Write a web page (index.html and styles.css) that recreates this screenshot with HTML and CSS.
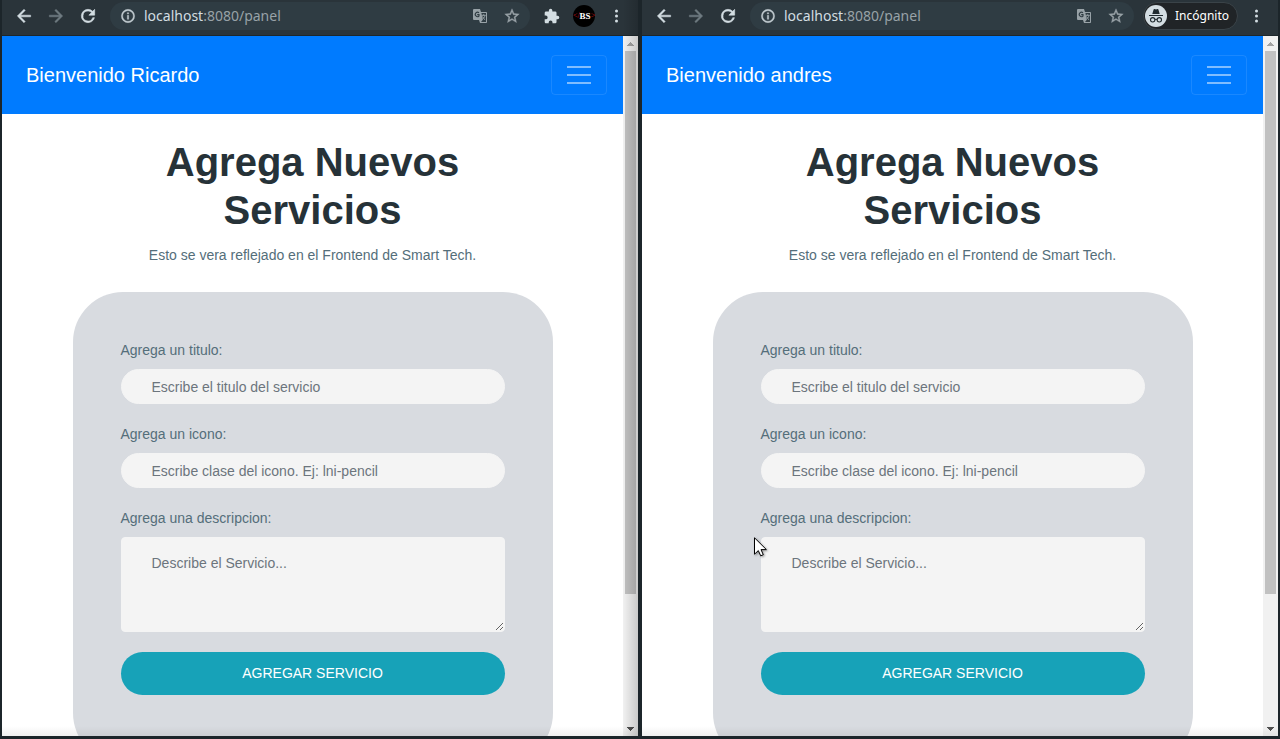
FILE: index.html
```html
<!DOCTYPE html>
<html lang="es">
<head>
<meta charset="utf-8">
<meta name="viewport" content="width=device-width, initial-scale=1">
<title>Panel</title>
<link rel="stylesheet" href="styles.css">
</head>
<body>
<svg class="sprite" aria-hidden="true">
  <symbol id="back" viewBox="0 0 24 24"><path d="M20 11H7.8l5.6-5.6L12 4l-8 8 8 8 1.4-1.4L7.8 13H20z" stroke="currentColor" stroke-width=".6"/></symbol>
  <symbol id="forward" viewBox="0 0 24 24"><path d="M4 11h12.2l-5.6-5.6L12 4l8 8-8 8-1.4-1.4 5.6-5.6H4z" stroke="currentColor" stroke-width=".6"/></symbol>
  <symbol id="reload" viewBox="0 0 24 24"><path d="M17.65 6.35A7.96 7.96 0 0 0 12 4a8 8 0 1 0 7.73 10h-2.08A6 6 0 1 1 12 6c1.66 0 3.14.69 4.22 1.78L13 11h7V4z" stroke="currentColor" stroke-width=".7"/></symbol>
  <symbol id="info" viewBox="0 0 24 24"><path d="M11 7h2v2h-2zm0 4h2v6h-2zm1-9a10 10 0 1 0 0 20 10 10 0 0 0 0-20zm0 18a8 8 0 1 1 0-16 8 8 0 0 1 0 16z" stroke="currentColor" stroke-width=".6"/></symbol>
  <symbol id="translate" viewBox="0 0 16 16">
    <path d="M2 1h6l1 3h5.2a.8.8 0 0 1 .8.8v9.4a.8.8 0 0 1-.8.8H8l-1-3H2a1 1 0 0 1-1-1V2a1 1 0 0 1 1-1z"/>
    <path class="cut" d="M9.4 5h4.6v9H9l1.8-2.2z"/>
    <path class="cut-line" d="M7 4.8A2.2 2.2 0 1 0 7 8V6.6H5.2"/>
    <path class="ink-line" d="M9.8 7.3h3.8M11.7 6.3v1M13 7.4c-.4 1.8-1.4 3-2.5 3.7M10.5 8.5c.6 1.4 1.6 2.5 2.6 3.3"/>
  </symbol>
  <symbol id="star" viewBox="1 1 22 22"><path d="M22 9.24l-7.19-.62L12 2 9.19 8.63 2 9.24l5.46 4.73L5.82 21 12 17.27 18.18 21l-1.63-7.03zM12 15.4l-3.76 2.27 1-4.28-3.32-2.88 4.38-.38L12 6.1l1.71 4.04 4.38.38-3.32 2.88 1 4.28z" stroke="currentColor" stroke-width=".5"/></symbol>
  <symbol id="puzzle" viewBox="1 0 23 23"><path d="M20.5 11H19V7a2 2 0 0 0-2-2h-4V3.5a2.5 2.5 0 0 0-5 0V5H4a2 2 0 0 0-2 2v3.8h1.5a2.7 2.7 0 0 1 0 5.4H2V20c0 1.1.9 2 2 2h3.8v-1.5a2.7 2.7 0 0 1 5.4 0V22H17a2 2 0 0 0 2-2v-4h1.5a2.5 2.5 0 0 0 0-5z"/></symbol>
  <symbol id="dots" viewBox="0 0 20 20"><circle cx="10.5" cy="5" r="1.5"/><circle cx="10.5" cy="10" r="1.5"/><circle cx="10.5" cy="15" r="1.5"/></symbol>
  <symbol id="spy" viewBox="0 0 22 22">
    <circle cx="11" cy="11" r="11"/>
    <path class="dark" d="M7.3 9l1.3-4.4c.2-.6.6-.7 1.1-.5l1.3.4 1.3-.4c.5-.2.9-.1 1.1.5L14.7 9z"/>
    <path class="dark" d="M4 10h14v1H4z"/>
    <g class="dark-line"><circle cx="7.7" cy="14.8" r="2.2"/><circle cx="14.3" cy="14.8" r="2.2"/><path d="M9.9 14.6q1.1-.8 2.2 0"/></g>
  </symbol>
  <symbol id="up" viewBox="0 0 7 4"><path d="M3 0h1v1h1v1h1v1h1v1H0V3h1V2h1V1h1z"/></symbol>
  <symbol id="down" viewBox="0 0 7 4"><path d="M3 4h1V3h1V2h1V1h1V0H0v1h1v1h1v1h1z"/></symbol>
</svg>

<main class="desktop">
  <section class="window shaded">
    <header class="toolbar">
      <button class="tool" aria-label="Atrás"><svg class="icon-lg"><use href="#back"/></svg></button>
      <button class="tool dim" aria-label="Adelante"><svg class="icon-lg"><use href="#forward"/></svg></button>
      <button class="tool" aria-label="Recargar"><svg class="icon-lg"><use href="#reload"/></svg></button>
      <div class="omnibox">
        <svg class="icon info"><use href="#info"/></svg>
        <div class="url" role="textbox" aria-label="Dirección"><span class="host">localhost</span>:8080/panel</div>
        <svg class="icon"><use href="#translate"/></svg>
        <svg class="icon"><use href="#star"/></svg>
      </div>
      <button class="tool" aria-label="Extensiones"><svg class="icon"><use href="#puzzle"/></svg></button>
      <button class="tool" aria-label="Perfil"><span class="avatar"><i>&lt;/</i><b>BS</b><i>&gt;</i></span></button>
      <button class="tool" aria-label="Menú"><svg class="icon-lg"><use href="#dots"/></svg></button>
    </header>
    <div class="viewport">
      <div class="page">
        <nav class="navbar">
          <a class="brand" href="#">Bienvenido Ricardo</a>
          <button class="toggler" aria-label="Abrir menú"><span class="bar"></span><span class="bar"></span><span class="bar"></span></button>
        </nav>
        <div class="content">
          <h1 class="title">Agrega Nuevos Servicios</h1>
          <p class="subtitle">Esto se vera reflejado en el Frontend de Smart Tech.</p>
          <form class="card">
            <label class="label" for="titulo-a">Agrega un titulo:</label>
            <input class="field" id="titulo-a" type="text" placeholder="Escribe el titulo del servicio">
            <label class="label" for="icono-a">Agrega un icono:</label>
            <input class="field" id="icono-a" type="text" placeholder="Escribe clase del icono. Ej: lni-pencil">
            <label class="label" for="desc-a">Agrega una descripcion:</label>
            <textarea class="field area" id="desc-a" placeholder="Describe el Servicio..."></textarea>
            <button class="submit" type="button">AGREGAR SERVICIO</button>
          </form>
        </div>
      </div>
      <div class="scrollbar"><svg class="arrow faint"><use href="#up"/></svg><div class="track"><div class="thumb"></div></div><svg class="arrow"><use href="#down"/></svg></div>
    </div>
  </section>

  <section class="window">
    <header class="toolbar">
      <button class="tool" aria-label="Atrás"><svg class="icon-lg"><use href="#back"/></svg></button>
      <button class="tool dim" aria-label="Adelante"><svg class="icon-lg"><use href="#forward"/></svg></button>
      <button class="tool" aria-label="Recargar"><svg class="icon-lg"><use href="#reload"/></svg></button>
      <div class="omnibox">
        <svg class="icon info"><use href="#info"/></svg>
        <div class="url" role="textbox" aria-label="Dirección"><span class="host">localhost</span>:8080/panel</div>
        <svg class="icon"><use href="#translate"/></svg>
        <svg class="icon"><use href="#star"/></svg>
      </div>
      <button class="chip"><svg class="spy"><use href="#spy"/></svg>Incógnito</button>
      <button class="tool" aria-label="Menú"><svg class="icon-lg"><use href="#dots"/></svg></button>
    </header>
    <div class="viewport">
      <div class="page">
        <nav class="navbar">
          <a class="brand" href="#">Bienvenido andres</a>
          <button class="toggler" aria-label="Abrir menú"><span class="bar"></span><span class="bar"></span><span class="bar"></span></button>
        </nav>
        <div class="content">
          <h1 class="title">Agrega Nuevos Servicios</h1>
          <p class="subtitle">Esto se vera reflejado en el Frontend de Smart Tech.</p>
          <form class="card">
            <label class="label" for="titulo-b">Agrega un titulo:</label>
            <input class="field" id="titulo-b" type="text" placeholder="Escribe el titulo del servicio">
            <label class="label" for="icono-b">Agrega un icono:</label>
            <input class="field" id="icono-b" type="text" placeholder="Escribe clase del icono. Ej: lni-pencil">
            <label class="label" for="desc-b">Agrega una descripcion:</label>
            <textarea class="field area" id="desc-b" placeholder="Describe el Servicio..."></textarea>
            <button class="submit" type="button">AGREGAR SERVICIO</button>
          </form>
        </div>
      </div>
      <div class="scrollbar"><svg class="arrow faint"><use href="#up"/></svg><div class="track"><div class="thumb"></div></div><svg class="arrow"><use href="#down"/></svg></div>
    </div>
  </section>
</main>
<svg class="cursor" viewBox="0 0 14 20" aria-hidden="true"><path d="M.5 .8v16.4l3.8-3.6 2.4 5.2 2.6-1.1-2.3-5.1h5.4z" fill="#fff" stroke="#000"/></svg>
</body>
</html>
```
FILE: styles.css
```css
* { box-sizing: border-box; }

body {
  margin: 0;
  background: #1c252a;
  font-family: "Liberation Sans", Arial, sans-serif;
  font-size: 14px;
}

button { font: inherit; border: 0; padding: 0; background: none; }
svg { fill: currentColor; flex: none; }
.sprite { position: absolute; width: 0; height: 0; }

.desktop {
  display: grid;
  grid-template-columns: 1fr 1fr;
  gap: 4px;
  height: 100vh;
  padding: 0 2px 3px;
  overflow: hidden;
}

.window {
  position: relative;
  display: flex;
  flex-direction: column;
  min-width: 0;
  min-height: 0;
}

/* soft shadow along the bottom edge and, on the left window, its right edge */
.window::after {
  content: "";
  position: absolute;
  inset: auto 0 0;
  height: 10px;
  background: linear-gradient(transparent, rgba(0, 0, 0, .06));
  pointer-events: none;
}
.shaded::before {
  content: "";
  position: absolute;
  inset: 0 0 0 auto;
  width: 15px;
  z-index: 1;
  background: linear-gradient(90deg, transparent, rgba(0, 0, 0, .16));
  pointer-events: none;
}

.toolbar {
  display: flex;
  flex: none;
  height: 36px;
  padding: 2px 6px 5px;
  background: #2a343a;
  border-bottom: 1px solid #1e272b;
  color: #d3dde2;
}
.tool {
  display: flex;
  width: 32px;
  height: 28px;
  align-items: center;
  justify-content: center;
  color: inherit;
}
.dim { color: #6f7b81; }
.icon { width: 16px; height: 16px; }
.icon-lg { width: 20px; height: 20px; }

.omnibox {
  display: flex;
  flex: 1;
  align-items: center;
  gap: 16px;
  height: 28px;
  margin: 0 6px;
  padding: 0 10px;
  border-radius: 14px;
  background: #2f3c43;
  color: #98a2a7;
}
.info { margin-right: -8px; color: #c0cacf; }
.url {
  flex: 1;
  font: 14px/20px "Noto Sans", sans-serif;
  white-space: nowrap;
}
.host { color: #d3dde2; }
.cut { fill: #2f3c43; }
.cut-line { fill: none; stroke: #2f3c43; stroke-width: 1.1; }
.ink-line { fill: none; stroke: #98a2a7; stroke-width: 1; }

.avatar {
  display: flex;
  width: 22px;
  height: 22px;
  align-items: center;
  justify-content: center;
  border-radius: 50%;
  background: #000;
  font: 9px/22px "Liberation Serif", serif;
}
.avatar i { color: #d0101c; font-style: normal; font-size: 8px; }
.avatar b { color: #fff; font-weight: bold; }

.chip {
  display: flex;
  align-items: center;
  gap: 8px;
  height: 28px;
  margin: 0 2px 0 3px;
  padding: 0 8px 0 1px;
  border: 1px solid #3a4348;
  border-radius: 14px;
  background: #202427;
  color: #fff;
  font: 12px/20px "Noto Sans", sans-serif;
}
.spy { width: 22px; height: 22px; color: #d3dde2; }
.dark { fill: #202b30; }
.dark-line { fill: none; stroke: #202b30; stroke-width: 1.1; }

.viewport { display: flex; flex: 1; min-height: 0; background: #fff; }
.page { flex: 1; overflow: hidden; }

.navbar {
  display: flex;
  align-items: center;
  justify-content: space-between;
  height: 78px;
  padding: 0 16px 0 24px;
  background: #007bff;
}
.brand { color: #fff; font-size: 20px; line-height: 30px; text-decoration: none; }
.toggler {
  display: flex;
  flex-direction: column;
  align-items: center;
  justify-content: center;
  gap: 6px;
  width: 56px;
  height: 40px;
  border: 1px solid rgba(255, 255, 255, .1);
  border-radius: 4px;
}
.bar { width: 24px; height: 2px; background: rgba(255, 255, 255, .5); }

.content {
  display: flex;
  flex-direction: column;
  align-items: center;
  padding: 24px 16px;
}
.title {
  max-width: 420px;
  margin: 0 0 10px;
  color: #263238;
  font-size: 40px;
  line-height: 48px;
  text-align: center;
}
.subtitle { margin: 0 0 26px; color: #546e7a; line-height: 22px; }

.card {
  display: flex;
  flex-direction: column;
  width: 100%;
  max-width: 480px;
  padding: 48px 48px 68px;
  border-radius: 50px;
  background: #d8dbe0;
}
.label { margin-bottom: 8px; color: #546e7a; line-height: 21px; }
.field {
  width: 100%;
  height: 35px;
  margin: 0 0 20px;
  padding: 0 30px;
  border: 1px solid #f4f4f4;
  border-radius: 18px;
  background: #f4f4f4;
  color: #495057;
  font: inherit;
}
.field::placeholder { color: #6c757d; opacity: 1; }
.area { height: 95px; padding: 15px 30px; border-radius: 4px; line-height: 21px; resize: vertical; }
.submit {
  height: 43px;
  padding-bottom: 2px;
  border-radius: 22px;
  background: #17a2b8;
  color: #fff;
}

.scrollbar {
  display: flex;
  flex-direction: column;
  align-items: center;
  width: 15px;
  padding: 6px 0 5px;
  background: #f1f1f1;
  color: #505050;
}
.arrow { width: 7px; height: 4px; }
.faint { color: #a3a3a3; }
.track { flex: 1; width: 11px; margin: 5px 0 6px; }
.thumb { height: 81%; background: #c1c1c1; }

.cursor {
  position: absolute;
  left: 754px;
  top: 537px;
  width: 14px;
  height: 20px;
  filter: drop-shadow(1px 1px 1px rgba(0, 0, 0, .4));
}
```
